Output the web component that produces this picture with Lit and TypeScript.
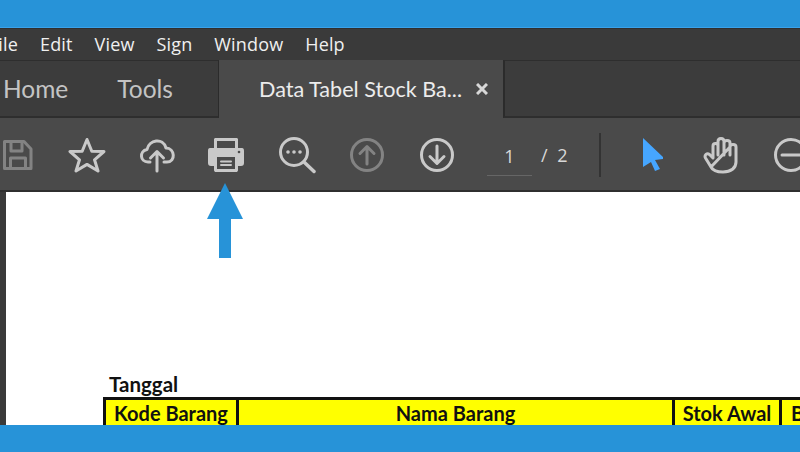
import { LitElement, html, css, svg } from "lit";
import { customElement } from "lit/decorators.js";

const icon = (w: number, h: number, body: unknown, cls = "") =>
  html`<svg class=${cls} width=${w} height=${h} viewBox="0 0 ${w} ${h}" fill="none" stroke="#c9c9c9" stroke-width="3" stroke-linecap="round" stroke-linejoin="round">${body}</svg>`;

@customElement("app-root")
export class AppRoot extends LitElement {
  static styles = css`
    :host { display: block; width: 800px; height: 452px; position: relative; overflow: hidden; font-family: "Open Sans", "Noto Sans", sans-serif; }
    .page { display: flex; flex-direction: column; height: 452px; }
    .band { background: #2793d8; flex: none; }
    .band.top { height: 27px; border-bottom: 1px solid #3aa2ea; }
    .band.bottom { height: 27px; }
    .menu { flex: none; height: 32px; box-sizing: border-box; background: #3a3a3a; border-top: 1px solid #2f2f2f; display: flex; align-items: center; gap: 22px; color: #f0f0f0; font-size: 18px; letter-spacing: .15px; overflow: hidden; padding-bottom: 1px; }
    .menu span:first-child { margin-left: -4px; width: 22px; overflow: hidden; direction: rtl; }
    .tabs { flex: none; height: 58px; display: flex; background: #4a4a4a; color: #c4c4c4; font-family: Lato, "Open Sans", sans-serif; }
    .tabs .left { width: 219px; box-sizing: border-box; height: 58px; background: #3c3c3c; border-top: 1px solid #2e2e2e; border-right: 1px solid #2b2b2b; border-bottom: 2px solid #2e2e2e; display: flex; align-items: center; font-size: 24.5px; gap: 49px; padding-left: 3px; }
    .tabs .active { width: 284px; display: flex; align-items: center; box-sizing: border-box; padding: 0 0 0 40px; font-size: 21.6px; color: #ececec; white-space: nowrap; }
    .tabs .active svg { margin-left: 14px; flex: none; }
    .tabs .rest { flex: 1; background: #3c3c3c; border-top: 1px solid #2e2e2e; border-left: 2px solid #2b2b2b; border-bottom: 2px solid #2e2e2e; height: 58px; box-sizing: border-box; }
    .toolbar { flex: none; height: 74px; box-sizing: border-box; background: #4a4a4a; border-bottom: 2px solid #2f2f2f; display: flex; align-items: center; padding-top: 1px; }
    .slot { width: 70px; flex: none; display: flex; justify-content: center; }
    .slot.first { width: 34px; }
    .slot.star { margin-left: 18px; }
    .slot.print { margin-left: -1px; }
    .slot.find { margin-left: 1px; }
    .pager { flex: none; margin-left: 15px; display: flex; align-items: center; color: #d8d8d8; font-size: 18px; width: 112px; }
    .num { width: 45px; height: 38px; line-height: 36px; text-align: center; box-sizing: border-box; border-bottom: 1px solid #666; margin-top: 4px; }
    .tot { margin-left: 9px; word-spacing: 5px; white-space: nowrap; }
    .sep { flex: none; width: 2px; height: 44px; background: #333; }
    .cursor { flex: none; margin-left: 41px; display: flex; }
    .hand { flex: none; margin-left: 39px; display: flex; }
    .zoom { flex: none; margin-left: 34px; display: flex; }
    .doc { flex: 1; min-height: 0; overflow: hidden; display: flex; background: #3a3a3a; }
    .sheet { flex: 1; margin-left: 6px; background: #fff; overflow: hidden; padding: 181px 0 0 97px; font-family: Lato, "Liberation Sans", sans-serif; font-weight: 700; color: #111; font-size: 20px; line-height: 23px; }
    .caption { padding-left: 6px; height: 24px; font-size: 20.5px; }
    .tbl { display: grid; grid-template-columns: 133px 436px 107px 120px; width: 796px; background: #ff0; border-top: 3px solid #111; border-left: 3px solid #111; height: 40px; }
    .tbl div { border-right: 3px solid #111; text-align: center; padding-top: 2px; box-sizing: border-box; white-space: nowrap; }
    .tbl div.b { text-align: left; padding-left: 9px; border: none; }
    .arrow { position: absolute; left: 206px; top: 183px; }
  `;

  render() {
    return html`<div class="page">
      <div class="band top"></div>
      <div class="menu"><span>File</span><span>Edit</span><span>View</span><span>Sign</span><span>Window</span><span>Help</span></div>
      <div class="tabs">
        <div class="left"><span>Home</span><span>Tools</span></div>
        <div class="active"><span>Data Tabel Stock Ba...</span>
          <svg width="12" height="12" viewBox="0 0 12 12" stroke="#d8d8d8" stroke-width="3"><path d="M1 1 L11 11 M11 1 L1 11"/></svg>
        </div>
        <div class="rest"></div>
      </div>
      <div class="toolbar">
        <div class="slot first">${icon(32, 34, svg`<g stroke="#838383"><path d="M3.5 3.5 H23 L30 11 V30.5 H3.5 Z"/><path d="M10 4 V13 H21 V4"/><path d="M9.5 30 V20 H24.5 V30"/></g>`)}</div>
        <div class="slot star">${icon(38, 36, svg`<path d="M19 2.5 L23.8 14.3 L36 14.5 L26.5 22.8 L30 34 L19 27.4 L8 34 L11.5 22.8 L2 14.5 L14.2 14.3 Z"/>`)}</div>
        <div class="slot">${icon(36, 36, svg`<path d="M11 25 H9 C1 25 0 14 8 12.5 C10 3 24 0 27 11 C36 11 37 25 28 25 H25"/><path d="M18 34 V15 M11.5 21 L18 14.5 L24.5 21"/>`)}</div>
        <div class="slot print">${icon(36, 36, svg`<path stroke="none" fill="#c9c9c9" d="M6 2.5 C6 1 7 1 8 1 H28 C29 1 30 1 30 2.5 V11 H34 C35.5 11 36 12 36 14 V26 C36 28 35 29 33 29 H30 V33 C30 34.5 29 35 28 35 H8 C7 35 6 34.5 6 33 V29 H3 C1 29 0 28 0 26 V14 C0 12 .5 11 2 11 H6 Z"/><path stroke="none" fill="#4a4a4a" d="M9 4 H27 V11 H9 Z M9 20 H27 V32 H9 Z"/><path stroke="#c9c9c9" stroke-width="2" d="M13 24.5 H23 M13 28 H23"/><circle cx="31" cy="15" r="1.3" fill="#4a4a4a" stroke="none"/>`)}</div>
        <div class="slot find">${icon(38, 38, svg`<circle cx="16" cy="16" r="13.5"/><path d="M26 26 L36 35.5" stroke-width="3.5"/><g fill="#c9c9c9" stroke="none"><circle cx="10" cy="16" r="1.8"/><circle cx="16" cy="16" r="1.8"/><circle cx="22" cy="16" r="1.8"/></g>`)}</div>
        <div class="slot">${icon(36, 36, svg`<g stroke="#838383"><circle cx="18" cy="18" r="15.5"/><path d="M18 27 V10 M11 16.5 L18 9.5 L25 16.5"/></g>`)}</div>
        <div class="slot">${icon(36, 36, svg`<circle cx="18" cy="18" r="15.5"/><path d="M18 9 V26 M11 19.5 L18 26.5 L25 19.5"/>`)}</div>
        <div class="pager"><div class="num">1</div><div class="tot">/ 2</div></div>
        <div class="sep"></div>
        <div class="cursor"><svg width="22" height="34" viewBox="0 0 22 34"><path fill="#46a6ff" d="M1 0 L21 19 L21 21 L13 22 L18 31 L13 33 L9 24 L1 29 Z"/></svg></div>
        <div class="hand">${icon(36, 38, svg`<path d="M8 31 L2.5 22 C1 19 4 16.5 6.5 18.5 L10 22 V10 C10 6.5 15 6.5 15 10 V19 M15 10 V5.5 C15 1.5 21 1.5 21 5.5 V19 M21 7 C21 3.5 27 3.5 27 7 V19 M27 11 C27 7.5 33 7.5 33 11 V26 C33 32 28 36 20 36 C14 36 10 35 8 31 Z"/>`)}</div>
        <div class="zoom">${icon(36, 36, svg`<circle cx="18" cy="18" r="15.5"/><path d="M9 18 H27"/>`)}</div>
      </div>
      <div class="doc"><div class="sheet">
        <div class="caption">Tanggal</div>
        <div class="tbl"><div>Kode Barang</div><div>Nama Barang</div><div>Stok Awal</div><div class="b">B</div></div>
      </div></div>
      <div class="band bottom"></div>
    </div>
    <svg class="arrow" width="38" height="76" viewBox="0 0 38 76"><path fill="#2793d8" d="M19 0 L37 36 H25 V75 H13 V36 H1 Z"/></svg>`;
  }
}
